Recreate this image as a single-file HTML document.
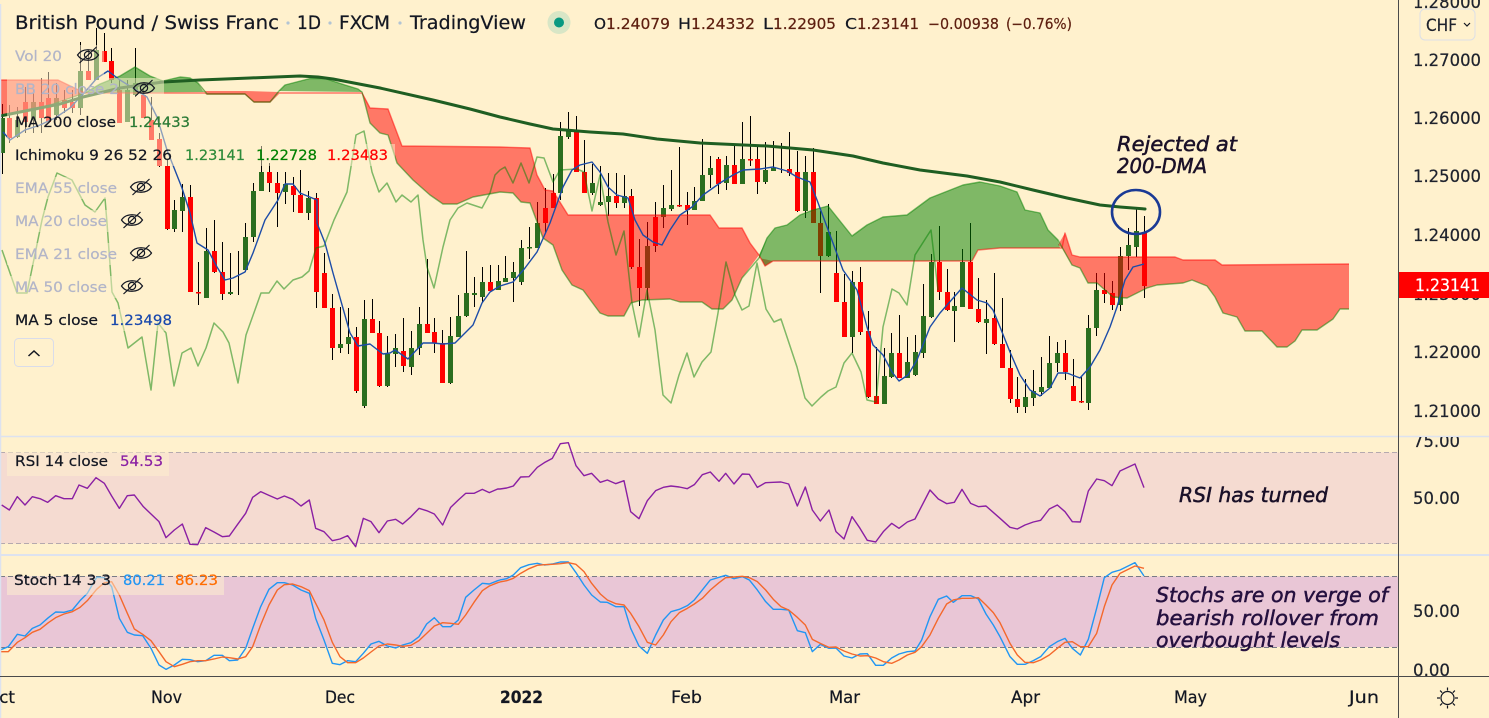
<!DOCTYPE html>
<html><head><meta charset="utf-8"><title>GBP/CHF</title>
<style>
html,body{margin:0;padding:0;background:#fff1cd;width:1489px;height:718px;overflow:hidden}
svg{display:block;position:absolute;left:0;top:0}
text{font-family:"DejaVu Sans","Liberation Sans",sans-serif;white-space:pre;stroke-width:.22px}
.l{font-size:14.5px;fill:#131722;stroke:#131722}
.g{font-size:14.5px;fill:#b2b5c8;stroke:#b2b5c8}
.a{font-size:17px;fill:#1e222d;stroke:#1e222d}
.t{font-size:17px;fill:#131722;stroke:#131722}
.o{font-size:15px;fill:#131722;stroke:#131722}
.v{font-size:15px;fill:#5d1e0f;stroke:#5d1e0f}
.h{font-size:19px;fill:#131722;stroke:#131722}
.n{font-size:20px;font-style:italic;fill:#1a1028;stroke:#1a1028;stroke-width:.5px}
.s{fill:#25103f;stroke:#25103f}
.nl{fill:none;stroke-linejoin:round}
polyline{vector-effect:non-scaling-stroke}
</style></head>
<body>
<svg width="1489" height="718" viewBox="0 0 1489 718" xmlns="http://www.w3.org/2000/svg">
<defs>
<clipPath id="c1"><rect x="0" y="0" width="1398" height="436"/></clipPath>
<clipPath id="c2"><rect x="1399" y="437" width="90" height="239"/></clipPath>
<g id="eye" fill="none" stroke="#131722" stroke-width="1.2"><path d="M-10.5 0C-6 -7 6 -7 10.5 0C6 7 -6 7 -10.5 0Z"/><circle r="3.6"/><path d="M-8.5 8L8.5 -8"/></g>
</defs>
<rect width="1489" height="718" fill="#fff1cd"/>

<!-- band fills -->
<rect x="0" y="452.5" width="1398" height="91" fill="#f5dbd1"/>
<rect x="0" y="576.5" width="1398" height="70.5" fill="#e9c6d6"/>
<path d="M0 452.5H1398M0 543.5H1398" stroke="#b5a9ae" stroke-dasharray="5 3" fill="none"/>
<path d="M0 576.5H1398M0 647.5H1398" stroke="#787b86" stroke-dasharray="5 3" fill="none"/>

<g clip-path="url(#c1)">
<!-- wicks -->
<path fill="none" stroke="#000" stroke-width="1" d="M2.5 104V174M9.5 105V143M17.5 107V138M25.5 87V133M33.5 90V133M41.5 78V133M48.5 72V115M56.5 83V120M64.5 90V113M72.5 90V113M80.5 42V115M88.5 50V80M96.5 28V80M104.5 33V62M111.5 48V83M119.5 80V123M127.5 80V122M135.5 48V97M143.5 87V118M151.5 97V140M159.5 133V167M167.5 160V230M174.5 200V232M182.5 184V232M190.5 185V292M198.5 262V305M206.5 228V298M214.5 220V273M222.5 242V300M230.5 253V295M238.5 251V295M245.5 223V272M253.5 183V242M261.5 146V190M269.5 163V192M277.5 172V227M285.5 172V204M293.5 177V212M300.5 170V213M308.5 191V220M316.5 193V308M324.5 253V308M332.5 294V360M340.5 307V353M348.5 308V354M356.5 327V393M364.5 300V408M372.5 299V333M379.5 321V387M387.5 336V387M395.5 334V367M403.5 318V372M411.5 331V375M419.5 307V355M427.5 259V333M434.5 318V353M442.5 330V383M450.5 317V384M458.5 295V337M466.5 251V317M474.5 277V307M482.5 267V303M490.5 265V291M498.5 265V290M505.5 256V282M513.5 262V302M521.5 240V285M529.5 227V259M537.5 202V248M545.5 188V233M553.5 174V208M560.5 122V200M568.5 112V139M576.5 116V172M584.5 140V193M592.5 164V195M600.5 166V206M608.5 173V216M616.5 173V208M624.5 175V208M631.5 189V269M639.5 239V306M647.5 222V300M655.5 202V252M663.5 185V228M671.5 170V211M679.5 147V207M687.5 192V225M694.5 187V210M702.5 139V201M710.5 156V188M718.5 157V194M726.5 156V190M734.5 146V184M742.5 122V184M750.5 116V166M757.5 147V194M765.5 142V184M773.5 141V171M781.5 143V173M789.5 132V176M797.5 151V212M805.5 156V218M813.5 148V223M820.5 211V293M828.5 204V257M836.5 231V302M844.5 274V337M852.5 271V353M860.5 267V335M868.5 311V398M876.5 347V404M884.5 348V404M891.5 333V378M899.5 315V378M907.5 337V378M915.5 335V376M923.5 284V358M931.5 254V318M939.5 226V300M947.5 269V311M954.5 292V342M962.5 249V307M970.5 223V309M978.5 278V323M986.5 300V354M994.5 273V345M1002.5 298V368M1010.5 350V403M1017.5 377V413M1025.5 379V413M1033.5 370V406M1041.5 357V396M1049.5 336V388M1057.5 342V372M1065.5 340V380M1073.5 359V401M1081.5 377V403M1088.5 315V410M1096.5 273V336M1104.5 273V303M1112.5 281V310M1120.5 247V311M1128.5 228V270M1136.5 207V257M1144.5 216V298"/>
<!-- green bodies -->
<path fill="none" stroke="#2b6e1f" stroke-width="5" d="M2.5 118V153M17.5 120V137M33.5 102V120M56.5 98V115M80.5 71V108M96.5 50V80M127.5 90V122M135.5 83V95M174.5 210V229M182.5 197V211M206.5 251V298M230.5 292V294M245.5 237V270M253.5 191V237M261.5 172V191M285.5 184V192M308.5 198V213M340.5 344V348M348.5 337V344M364.5 319V406M387.5 354V386M395.5 348V354M411.5 348V367M419.5 324V348M450.5 336V383M458.5 316V337M466.5 293V316M474.5 293V295M482.5 282V297M498.5 281V290M505.5 278V282M513.5 272V278M521.5 248V282M529.5 247V248.5M537.5 223V248M560.5 136V193M568.5 131V137M592.5 183V193M600.5 202V205M608.5 196V202M624.5 196V203M647.5 246V288M663.5 208V217M671.5 205V209M694.5 201V210M702.5 175V201M710.5 168V175M726.5 165V183M742.5 159V184M765.5 170V182M773.5 168V171M805.5 172V211M828.5 232V256M852.5 282V337M884.5 376V404M891.5 353V377M907.5 362V378M915.5 352V375M923.5 316V353M931.5 262V317M954.5 306V311M962.5 262V307M986.5 319V323M1025.5 397V407M1033.5 391V398M1041.5 387V392M1049.5 363V388M1057.5 353V363M1088.5 328V403M1096.5 290V328M1120.5 256V305M1128.5 245V256M1136.5 231V247"/>
<!-- red bodies -->
<path fill="none" stroke="#f00" stroke-width="5" d="M9.5 118V138M25.5 102V122M41.5 102V118M48.5 98V122M64.5 100V108M72.5 102V108M88.5 71V80M104.5 51V62M111.5 61V80M119.5 90V123M143.5 95V118M151.5 120V140M159.5 139V166M167.5 166V229M190.5 197V292M198.5 292V293.5M214.5 251V272M222.5 272V294M269.5 172V183M277.5 183V193M293.5 186V195M300.5 195V213M316.5 198V292M324.5 273V308M332.5 308V348M356.5 337V391M372.5 319V333M379.5 333V386M403.5 351V366M427.5 324V333M434.5 332V343M442.5 343V383M490.5 282V291M545.5 208V223M553.5 193V208M576.5 132V172M584.5 172V193M616.5 196V203M631.5 196V267M639.5 267V288M655.5 217V246M679.5 205V206.5M687.5 205V210M718.5 159V184M734.5 165V184M750.5 159V160.5M757.5 159V182M789.5 169V173M797.5 172V211M813.5 172V223M820.5 223V256M836.5 273V302M844.5 302V337M860.5 282V332M868.5 331V397M876.5 396V404M899.5 353V378M939.5 262V292M947.5 292V310M970.5 262V309M978.5 309V322M994.5 318V344M1002.5 344V368M1010.5 368V399M1017.5 399V407M1065.5 353V372M1073.5 386V401M1081.5 401V402.5M1104.5 290V294M1112.5 293V305M1144.5 232V286"/>

<!-- cloud fill -->
<g fill="rgba(255,0,0,.5)">
<polygon points="0,80 58,80 85,93 50,105 0,116"/>
<polygon points="198,83 207,94 245,94 254,102 270,102 279,92 245,91 205,91"/>
<polygon points="362,92 370,108 388,109 402,146 500,147 530,148 537,175 545,190 553,191 568,215 710,215 719,228 742,228 750,243 759,255 742,278 732,300 723,309 712,309 702,302 680,302 670,299 642,300 631,303 624,316 608,316 600,313 583,290 572,285 562,270 553,245 543,238 530,203 521,202 513,193 500,192 473,197 457,204 443,204 430,195 413,180 397,163 388,135 380,133 370,123"/>
<polygon points="759,255 765,266 773,261 759,258"/>
<polygon points="1058,245 1065,233 1072,255 1080,257 1175,257 1183,260 1215,260 1222,265 1349,264 1349,309 1340,309 1333,319 1317,330 1302,330 1295,341 1287,347 1277,347 1262,331 1245,331 1237,317 1223,313 1215,297 1207,286 1192,280 1183,283 1157,285 1147,288 1137,293 1127,298 1113,297 1097,283 1088,283 1080,268 1072,265 1062,248"/>
</g>
<g fill="rgba(0,128,0,.5)">
<polygon points="85,93 100,84 120,76 135,67 150,76 163,81 180,77 190,78 198,83 203,91 205,92"/>
<polygon points="279,91 285,85 310,78.5 325,78.5 345,85 358,89 362,92"/>
<polygon points="759,255 767,238 775,228 787,225 800,215 813,210 828,206 852,236 867,225 883,217 907,215 930,198 963,185 980,182 1000,186 1017,192 1025,210 1040,213 1048,230 1058,240 1060,248 1000,248 978,250 972,261 773,261 765,266"/>
</g>
<!-- cloud edges -->
<g class="nl" stroke-width="1.4">
<polyline class="nl" stroke="rgba(255,0,0,.5)" points="0,80 58,80 85,93 205,93 207,94 245,94 254,102 270,102 279,93 362,93 370,108 388,109 402,146 500,147 530,148 537,175 545,190 553,191 568,215 710,215 719,228 742,228 750,243 759,255 765,266 773,261 972,261 978,250 1000,248 1062,248 1065,233 1072,255 1080,257 1175,257 1183,260 1215,260 1222,265 1349,264"/>
<polyline class="nl" stroke="rgba(0,128,0,.5)" points="0,116 50,105 85,93 100,84 120,76 135,67 150,76 163,81 180,77 190,78 198,83 207,94 245,94 254,102 270,102 279,91 285,85 310,78.5 325,78.5 345,85 358,89 362,92 370,123 380,133 388,135 397,163 413,180 430,195 443,204 457,204 473,197 500,192 513,193 521,202 530,203 543,238 553,245 562,270 572,285 583,290 600,313 608,316 624,316 631,303 642,300 670,299 680,302 702,302 712,309 723,309 732,300 742,278 759,258 767,238 775,228 787,225 800,215 813,210 828,206 852,236 867,225 883,217 907,215 930,198 963,185 980,182 1000,186 1017,192 1025,210 1040,213 1048,230 1058,240 1072,265 1080,268 1088,283 1097,283 1113,297 1127,298 1137,293 1147,288 1157,285 1183,283 1192,280 1207,286 1215,297 1223,313 1237,317 1245,331 1262,331 1277,347 1287,347 1295,341 1302,330 1317,330 1333,319 1340,309 1349,309"/>
</g>
<!-- chikou -->
<polyline class="nl" stroke="rgba(0,128,0,.5)" stroke-width="1.5" points="2,250 17,293 27,293 42,220 48,197 57,173 72,180 85,205 95,212 105,198 107,223 112,292 118,303 128,348 142,337 151,390 158,323 166,333 174,386 182,353 191,348 198,366 206,348 214,323 223,332 229,343 238,383 246,335 261,293 269,293 277,281 284,289 293,280 302,277 309,271 316,248 324,246 334,220 347,192 356,135 364,131 372,172 379,192 387,183 396,202 402,195 411,202 418,195 423,240 427,267 434,288 443,247 450,220 458,208 467,203 482,208 490,193 495,175 500,170 505,167 513,183 521,163 529,183 537,157 544,158 553,182 560,170 577,169 584,172 592,211 600,175 608,222 616,255 624,231 632,303 639,337 647,290 655,330 663,395 671,403 679,375 687,353 694,377 702,362 711,352 718,313 726,262 735,295 742,310 749,306 757,263 766,309 774,322 781,319 797,367 805,398 812,406 821,397 828,391 836,387 844,363 852,353 861,372 867,400 876,402 883,327 892,289 899,293 907,305 915,255 931,230 938,290"/>
<!-- MA5 -->
<polyline class="nl" stroke="#1c4ca8" stroke-width="1.4" points="3,132 10,140 25,130 40,125 55,118 70,108 85,92 97,78 108,71 120,80 133,88 147,97 157,117 167,150 182,188 190,213 197,243 208,250 217,267 225,280 233,278 245,272 253,253 265,220 278,200 285,184 293,184 300,193 317,200 317,223 325,243 333,273 350,333 358,346 370,344 383,354 390,353 395,350 408,359 423,343 433,343 443,344 455,343 465,333 473,325 482,303 490,292 500,286 513,282 525,268 537,252 550,223 563,187 572,170 580,165 592,162 600,172 608,187 617,195 628,198 635,220 643,235 653,242 662,245 670,230 680,215 692,207 703,195 720,183 733,175 743,170 760,169 773,167 787,171 797,177 810,182 817,200 843,270 857,290 867,327 873,345 883,355 892,372 899,381 908,375 917,360 930,327 940,313 962,288 977,300 987,303 993,310 1000,327 1010,352 1020,375 1030,390 1040,396 1050,388 1058,373 1067,373 1080,378 1090,367 1100,350 1110,327 1117,307 1125,280 1133,267 1144,264"/>
<!-- MA200 -->
<polyline class="nl" stroke="#1f5e22" stroke-width="3" stroke-linecap="round" points="0,116 30,110 60,104 83,97 120,88 163,82 200,80 250,78 300,76 318,77 333,79 380,88 433,100 470,109 500,117 530,124 553,129 590,132 623,134 657,139 700,143 767,146 813,150 853,156 883,163 920,170 967,176 1000,182 1033,190 1067,198 1100,205 1120,207 1145,209"/>

<!-- legend row scrims -->
<g fill="#fff1cd" fill-opacity=".5">
<rect x="7" y="45" width="97" height="33"/><rect x="7" y="78" width="157" height="33"/><rect x="7" y="111" width="187" height="33"/><rect x="7" y="144" width="388" height="22"/><rect x="7" y="177" width="147" height="22"/><rect x="7" y="210" width="138" height="22"/><rect x="7" y="243" width="147" height="22"/><rect x="7" y="276" width="138" height="22"/><rect x="7" y="309" width="170" height="22"/>
</g>
</g>

<!-- RSI -->
<rect x="7" y="452" width="162" height="24" fill="#fff1cd" fill-opacity=".5"/>
<g transform="translate(0,430) scale(.33333)"><polyline class="nl" stroke="#8a1fa3" stroke-width="1.4" points="5,225 28,240 52,200 75,225 97,200 120,206 143,217 167,197 192,206 217,206 237,165 262,175 288,143 313,160 335,198 358,235 382,197 403,195 430,230 453,252 477,275 498,323 523,300 547,282 570,343 593,344 617,293 642,306 667,320 688,318 713,283 737,250 758,202 782,185 807,196 832,207 853,198 878,208 903,228 928,210 947,295 972,305 997,332 1020,327 1043,317 1067,350 1090,265 1113,275 1137,308 1162,273 1187,268 1208,282 1233,260 1257,235 1280,242 1303,252 1328,285 1352,232 1375,210 1397,190 1422,190 1447,178 1468,188 1493,177 1500,177 1520,174 1540,168 1562,141 1587,140 1612,112 1633,98 1657,85 1681,41 1705,38 1728,107 1752,137 1775,130 1801,157 1822,150 1847,161 1872,152 1892,245 1917,266 1942,212 1967,182 1990,172 2013,168 2038,171 2062,176 2083,164 2107,134 2131,126 2157,154 2177,130 2202,162 2227,132 2248,133 2272,172 2297,158 2320,157 2343,156 2366,162 2392,228 2416,171 2437,240 2461,273 2487,240 2508,305 2532,327 2556,260 2580,295 2602,331 2627,336 2650,305 2675,280 2697,295 2722,276 2745,267 2790,180 2815,207 2840,221 2863,217 2886,178 2912,220 2935,230 2958,228 3000,265 3030,292 3052,297 3075,285 3100,276 3122,271 3148,237 3172,225 3195,245 3217,275 3241,276 3265,183 3290,147 3313,152 3336,167 3360,123 3405,102 3432,173"/></g>

<!-- Stoch -->
<g transform="translate(0,430) scale(.33333)">
<polyline class="nl" stroke="#2196f3" stroke-width="1.4" points="0,660 25,650 52,613 75,618 97,595 120,585 145,563 167,546 192,547 217,540 240,512 262,490 290,442 313,443 335,470 358,565 382,607 403,615 428,617 453,655 477,705 498,718 523,705 547,688 570,689 593,695 617,692 642,676 667,676 688,692 713,690 737,655 758,595 782,530 807,478 832,458 853,458 878,465 903,480 928,490 947,565 972,630 997,700 1020,704 1043,692 1067,695 1090,670 1113,642 1137,634 1162,648 1187,654 1208,645 1233,638 1257,620 1280,582 1303,563 1328,590 1352,590 1375,570 1397,502 1422,480 1447,460 1468,462 1493,452 1500,450 1520,446 1540,435 1562,413 1587,404 1612,400 1633,405 1657,402 1681,396 1705,396 1728,428 1752,465 1775,495 1801,516 1822,517 1847,530 1872,530 1892,595 1917,648 1942,670 1967,615 1990,570 2013,545 2038,538 2062,527 2083,510 2107,480 2131,450 2157,442 2177,436 2202,446 2227,440 2248,450 2272,480 2297,515 2320,538 2343,538 2366,540 2392,602 2416,608 2437,665 2461,643 2487,655 2508,654 2532,678 2556,684 2580,672 2602,671 2627,706 2650,706 2675,684 2697,672 2722,665 2745,663 2765,630 2790,560 2815,508 2840,498 2860,517 2886,497 2912,497 2935,507 2958,552 2980,585 3000,620 3030,680 3052,703 3075,703 3100,692 3122,680 3148,650 3172,635 3195,625 3217,655 3241,675 3265,628 3290,535 3313,443 3336,427 3360,420 3405,398 3432,438"/>
<polyline class="nl" stroke="#f4682c" stroke-width="1.4" points="0,665 25,665 52,637 75,623 97,607 120,598 145,578 167,563 192,552 217,545 240,532 262,512 290,478 313,458 335,455 358,495 382,550 403,597 428,613 453,632 477,665 498,695 523,710 547,703 570,695 593,692 617,692 642,687 667,681 688,683 713,687 737,680 758,650 782,585 807,525 832,480 853,464 878,462 903,470 928,482 947,520 972,570 997,637 1020,680 1043,698 1067,698 1090,684 1113,666 1137,648 1162,642 1187,645 1208,649 1233,646 1257,632 1280,610 1303,588 1328,578 1352,580 1375,583 1397,555 1422,517 1447,482 1468,468 1493,458 1500,456 1520,452 1540,445 1562,430 1587,416 1612,406 1633,404 1657,403 1681,401 1705,398 1728,403 1752,425 1775,460 1801,492 1822,510 1847,521 1872,525 1892,550 1917,590 1942,637 1967,645 1990,615 2013,575 2038,548 2062,535 2083,522 2107,505 2131,480 2157,458 2177,443 2202,441 2227,439 2248,443 2272,455 2297,480 2320,508 2343,530 2366,540 2392,562 2416,585 2437,628 2461,640 2487,652 2508,651 2532,663 2556,672 2580,678 2602,677 2627,684 2650,695 2675,700 2697,690 2722,675 2745,667 2765,650 2790,615 2815,565 2840,522 2860,510 2886,505 2912,505 2935,503 2958,525 2980,548 3000,578 3030,640 3052,675 3075,697 3100,698 3122,690 3148,675 3172,655 3195,637 3217,635 3241,650 3265,650 3290,610 3313,530 3336,465 3360,430 3405,408 3432,415"/>
</g>
<rect x="7" y="577" width="217" height="18" fill="#fff1cd" fill-opacity=".5"/>

<!-- separators & axes -->
<path d="M0 436.5H1398" stroke="#dde2ef" stroke-width="1.5"/>
<path d="M0 555H1489" stroke="#dde2ef" stroke-width="2"/>
<path d="M1399 436.5H1489" stroke="#dde2ef" stroke-width="1.5"/>
<path d="M.5 4V718" stroke="#dde2ef" stroke-width="1.5" fill="none"/>
<path d="M0 676.5H1489" stroke="#4a4a4a"/>
<path d="M1398.5 0V718" stroke="#4a4a4a"/>

<!-- title -->
<text class="h" x="15" y="29" textLength="264" lengthAdjust="spacingAndGlyphs">British Pound / Swiss Franc</text>
<circle cx="288" cy="23" r="1.6" fill="#b2c4d4"/>
<text class="h" x="297" y="29" textLength="24" lengthAdjust="spacingAndGlyphs">1D</text>
<circle cx="330" cy="23" r="1.6" fill="#b2c4d4"/>
<text class="h" x="339" y="29" textLength="51" lengthAdjust="spacingAndGlyphs">FXCM</text>
<circle cx="400" cy="23" r="1.6" fill="#b2c4d4"/>
<text class="h" x="410" y="29" textLength="116" lengthAdjust="spacingAndGlyphs">TradingView</text>
<circle cx="559" cy="22.5" r="11.5" fill="#d8e6c6"/><circle cx="559" cy="22.5" r="5" fill="#089981"/>

<text class="o" x="594" y="29" textLength="12" lengthAdjust="spacingAndGlyphs">O</text><text class="v" x="606" y="29" textLength="64" lengthAdjust="spacingAndGlyphs">1.24079</text>
<text class="o" x="678" y="29" textLength="13" lengthAdjust="spacingAndGlyphs">H</text><text class="v" x="691" y="29" textLength="64" lengthAdjust="spacingAndGlyphs">1.24332</text>
<text class="o" x="763" y="29" textLength="10" lengthAdjust="spacingAndGlyphs">L</text><text class="v" x="773" y="29" textLength="63" lengthAdjust="spacingAndGlyphs">1.22905</text>
<text class="o" x="845" y="29" textLength="12" lengthAdjust="spacingAndGlyphs">C</text><text class="v" x="857" y="29" textLength="62" lengthAdjust="spacingAndGlyphs">1.23141</text>
<text class="v" x="928" y="29" textLength="71" lengthAdjust="spacingAndGlyphs">−0.00938</text>
<text class="v" x="1006" y="29" textLength="66" lengthAdjust="spacingAndGlyphs">(−0.76%)</text>

<!-- legends -->
<text class="g" x="15" y="61" textLength="47" lengthAdjust="spacingAndGlyphs">Vol 20</text><use href="#eye" x="88" y="55"/>
<text class="g" x="15" y="94" textLength="104" lengthAdjust="spacingAndGlyphs">BB 20 close 2</text><use href="#eye" x="144" y="88"/>
<text class="l" x="15" y="127" textLength="101" lengthAdjust="spacingAndGlyphs">MA 200 close</text><text class="l" x="129" y="127" style="fill:#2a7a35;stroke:#2a7a35" textLength="61" lengthAdjust="spacingAndGlyphs">1.24433</text>
<text class="l" x="15" y="160" textLength="157" lengthAdjust="spacingAndGlyphs">Ichimoku 9 26 52 26</text>
<text class="l" x="185" y="160" style="fill:#2e8b3a;stroke:#2e8b3a" textLength="60" lengthAdjust="spacingAndGlyphs">1.23141</text>
<text class="l" x="256" y="160" style="fill:#008000;stroke:#008000" textLength="61" lengthAdjust="spacingAndGlyphs">1.22728</text>
<text class="l" x="327" y="160" style="fill:#f00;stroke:#f00" textLength="61" lengthAdjust="spacingAndGlyphs">1.23483</text>
<text class="g" x="15" y="193" textLength="102" lengthAdjust="spacingAndGlyphs">EMA 55 close</text><use href="#eye" x="141" y="187"/>
<text class="g" x="15" y="226" textLength="92" lengthAdjust="spacingAndGlyphs">MA 20 close</text><use href="#eye" x="132" y="220"/>
<text class="g" x="15" y="259" textLength="102" lengthAdjust="spacingAndGlyphs">EMA 21 close</text><use href="#eye" x="141" y="253"/>
<text class="g" x="15" y="292" textLength="92" lengthAdjust="spacingAndGlyphs">MA 50 close</text><use href="#eye" x="132" y="286"/>
<text class="l" x="15" y="325" textLength="83" lengthAdjust="spacingAndGlyphs">MA 5 close</text><text class="l" x="110" y="325" style="fill:#1848ad;stroke:#1848ad" textLength="62" lengthAdjust="spacingAndGlyphs">1.23498</text>
<rect x="14.5" y="338.5" width="39" height="28" rx="4" fill="#fff1cd" stroke="#d9dcea"/>
<path d="M28.5 356L34 351L39.5 356" fill="none" stroke="#131722" stroke-width="1.5"/>

<text class="l" x="15" y="466" textLength="93" lengthAdjust="spacingAndGlyphs">RSI 14 close</text><text class="l" x="120" y="466" style="fill:#8a1fa3;stroke:#8a1fa3" textLength="43" lengthAdjust="spacingAndGlyphs">54.53</text>
<text class="l" x="14" y="585" textLength="97" lengthAdjust="spacingAndGlyphs">Stoch 14 3 3</text><text class="l" x="123" y="585" style="fill:#2196f3;stroke:#2196f3" textLength="42" lengthAdjust="spacingAndGlyphs">80.21</text><text class="l" x="175" y="585" style="fill:#ff6d00;stroke:#ff6d00" textLength="43" lengthAdjust="spacingAndGlyphs">86.23</text>

<!-- annotations -->
<ellipse cx="1136" cy="212" rx="24" ry="22" fill="none" stroke="#1a3a95" stroke-width="2.6"/>
<text class="n" x="1117" y="151" textLength="120" lengthAdjust="spacingAndGlyphs">Rejected at</text>
<text class="n" x="1117" y="173" textLength="90" lengthAdjust="spacingAndGlyphs">200-DMA</text>
<text class="n" x="1179" y="502" textLength="149" lengthAdjust="spacingAndGlyphs">RSI has turned</text>
<text class="n s" x="1156" y="602" textLength="232" lengthAdjust="spacingAndGlyphs">Stochs are on verge of</text>
<text class="n s" x="1156" y="625" textLength="223" lengthAdjust="spacingAndGlyphs">bearish rollover from</text>
<text class="n s" x="1156" y="647" textLength="184" lengthAdjust="spacingAndGlyphs">overbought levels</text>

<!-- price axis -->
<text class="a" x="1413" y="8" textLength="68" lengthAdjust="spacingAndGlyphs">1.28000</text>
<text class="a" x="1413" y="66" textLength="68" lengthAdjust="spacingAndGlyphs">1.27000</text>
<text class="a" x="1413" y="124" textLength="68" lengthAdjust="spacingAndGlyphs">1.26000</text>
<text class="a" x="1413" y="182" textLength="68" lengthAdjust="spacingAndGlyphs">1.25000</text>
<text class="a" x="1413" y="241" textLength="68" lengthAdjust="spacingAndGlyphs">1.24000</text>
<text class="a" x="1413" y="300" textLength="68" lengthAdjust="spacingAndGlyphs">1.23000</text>
<text class="a" x="1413" y="358" textLength="68" lengthAdjust="spacingAndGlyphs">1.22000</text>
<text class="a" x="1413" y="417" textLength="68" lengthAdjust="spacingAndGlyphs">1.21000</text>
<rect x="1399" y="272" width="90" height="26" fill="#f00"/>
<text x="1415" y="291" font-size="17" fill="#fff" stroke="#fff" textLength="65" lengthAdjust="spacingAndGlyphs">1.23141</text>
<rect x="1420" y="9" width="55" height="31" rx="5" fill="#fff1cd" stroke="#dcdfe6"/>
<text class="a" x="1426" y="31" textLength="31" lengthAdjust="spacingAndGlyphs">CHF</text>
<path d="M1464 23L1467 26L1470 23" fill="none" stroke="#131722" stroke-width="1.2"/>
<g clip-path="url(#c2)">
<text class="a" x="1413" y="447" textLength="47" lengthAdjust="spacingAndGlyphs">75.00</text>
<text class="a" x="1413" y="504" textLength="47" lengthAdjust="spacingAndGlyphs">50.00</text>
<text class="a" x="1413" y="617" textLength="47" lengthAdjust="spacingAndGlyphs">50.00</text>
<text class="a" x="1413" y="676" textLength="37" lengthAdjust="spacingAndGlyphs">0.00</text>
</g>

<!-- time axis -->
<text class="t" x="-14" y="703" textLength="29" lengthAdjust="spacingAndGlyphs">Oct</text>
<text class="t" x="151" y="703" textLength="31" lengthAdjust="spacingAndGlyphs">Nov</text>
<text class="t" x="325" y="703" textLength="30" lengthAdjust="spacingAndGlyphs">Dec</text>
<text class="t" x="500" y="703" textLength="43" lengthAdjust="spacingAndGlyphs" style="font-weight:700">2022</text>
<text class="t" x="671" y="703" textLength="31" lengthAdjust="spacingAndGlyphs">Feb</text>
<text class="t" x="829" y="703" textLength="31" lengthAdjust="spacingAndGlyphs">Mar</text>
<text class="t" x="1011" y="703" textLength="29" lengthAdjust="spacingAndGlyphs">Apr</text>
<text class="t" x="1174" y="703" textLength="33" lengthAdjust="spacingAndGlyphs">May</text>
<text class="t" x="1349" y="703" textLength="30" lengthAdjust="spacingAndGlyphs">Jun</text>
<g transform="translate(1447.5,698)" fill="none" stroke="#131722" stroke-width="1.2">
<circle r="6.5"/><path d="M0 -10.5V-7.5M0 10.5V7.5M-10.5 0H-7.5M10.5 0H7.5M-7.4 -7.4L-5.3 -5.3M7.4 -7.4L5.3 -5.3M-7.4 7.4L-5.3 5.3M7.4 7.4L5.3 5.3"/>
</g>
</svg>
</body></html>
